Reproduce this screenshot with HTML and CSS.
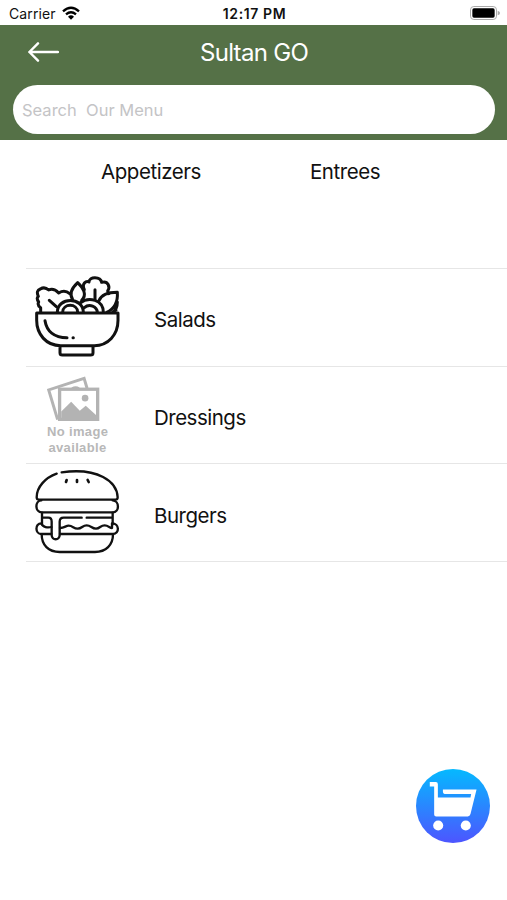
FILE: index.html
```html
<!DOCTYPE html>
<html lang="en">
<head>
<meta charset="utf-8">
<title>Sultan GO</title>
<link rel="stylesheet" href="styles.css">
</head>
<body>
<div class="status">
  <div class="carrier"><span>Carrier</span>
    <svg class="wifi" viewBox="0 0 54 42"><path d="M27 41 18 32Q27 24 36 32Z" fill="#000"/><path d="M12 25Q27 12 42 25M3 16Q27-6 51 16" fill="none" stroke="#000" stroke-width="7"/></svg>
  </div>
  <span class="time">12:17 PM</span>
  <svg class="battery" viewBox="0 0 90 42"><rect x="1.5" y="1.5" width="78" height="39" rx="10" fill="#fff" stroke="#aaa" stroke-width="3"/><rect x="7" y="7" width="67" height="28" rx="5"/><path d="M83 14q7 2 7 7t-7 7z" fill="#aaa"/></svg>
</div>
<header class="header">
  <div class="bar">
    <svg class="back" viewBox="0 0 90 58"><path d="M87 29H4M29 4 4 29 29 54" fill="none" stroke="#fff" stroke-width="7" stroke-linecap="round" stroke-linejoin="round"/></svg>
    <h1 class="title">Sultan GO</h1>
  </div>
  <div class="search"><span>Search&nbsp; Our Menu</span></div>
</header>
<nav class="tabs"><span class="tab appetizers">Appetizers</span><span class="tab entrees">Entrees</span></nav>
<ul class="menu">
  <li class="row">
    <svg class="icon" viewBox="42 39 264 264" fill="none" stroke="#111" stroke-width="9" stroke-linejoin="round" stroke-linecap="round">
      <path d="M50 159H294V181C294 225 264 257 223 257H122C78 257 50 222 50 181ZM120 258V278Q120 285 127 285H212Q219 285 219 278V258"/>
      <path d="M75 182C80 213 102 233 141 233M159 233h1"/>
      <path d="M62 157V143Q51 136 56 126 48 115 55 109 47 92 61 87 74 79 86 90 101 83 116 99 134 88 149 101M88 121 109 140"/>
      <path d="M112 157C112 110 190 110 190 157M128 157C128 129 173 129 173 157"/>
      <path d="M180 129C207 108 250 120 250 157M193 143C208 130 231 139 232 157"/>
      <path d="M158 119C145 99 158 82 173 68 190 84 202 104 185 121"/>
      <path d="M193 89C184 69 199 62 207 66 208 49 241 49 245 67 265 61 271 82 263 93L266 101M225 89V117"/>
      <path d="M237 122C245 103 268 97 292 97 294 124 284 146 260 157M292 126Q292 148 278 157L288 150"/>
    </svg>
    <span class="name salads">Salads</span>
  </li>
  <li class="row">
    <div class="icon missing">
      <svg class="photos" viewBox="82 33 156 136"><path d="M112 165 85 75 192 40 201 70" fill="none" stroke="#b3b3b3" stroke-width="9"/><rect x="118" y="73" width="115" height="91" fill="#fff" stroke="#b3b3b3" stroke-width="10"/><circle cx="195" cy="100" r="10" fill="#b3b3b3"/><path d="M123 140 153 111 179 138 197 123 228 151V160H123Z" fill="#b3b3b3"/><path d="M155 70q12-7 22 0" fill="none" stroke="#b3b3b3" stroke-width="5"/></svg>
      <span class="note">No image<br>available</span>
    </div>
    <span class="name">Dressings</span>
  </li>
  <li class="row">
    <svg class="icon" viewBox="42 27 264 264" fill="none" stroke="#111" stroke-width="7" stroke-linejoin="round" stroke-linecap="round">
      <path d="M110 44C76 56 50 84 50 115Q50 122 57 122H286Q293 122 293 115C291 67 234 25 125 40"/>
      <path d="M140 63l-2 6M171 63v6M203 63l3 6" stroke-width="8"/>
      <path d="M64 124C44 125 44 160 66 160H278C299 160 299 125 278 124"/>
      <path d="M66 161V196M278 161V196M68 176H85Q95 176 95 188V228C95 245 119 245 119 228V188Q119 176 131 176H185M200 176H277"/>
      <path d="M94 225H64C45 225 44 193 64 193 68 205 84 207 94 204M120 207C134 207 137 200 146 200 159 200 160 209 173 209 186 209 187 199 200 199 213 199 215 209 228 209 240 209 241 199 254 199 265 199 269 207 276 207V193C299 193 299 225 279 225H120"/>
      <path d="M65 226C65 258 85 279 119 279H225C258 279 279 258 279 226"/>
    </svg>
    <span class="name">Burgers</span>
  </li>
</ul>
<button class="cart" aria-label="Cart">
  <svg viewBox="35 27 220 220" fill="#fff"><path d="M76 66H94Q100 66 100 72V112H197L199 101H120Q115 101 115 95V88H215L197 161Q195 168 189 168H95Q89 168 89 162V79H76Z"/><circle cx="101" cy="195" r="15"/><circle cx="183" cy="195" r="15"/></svg>
</button>
</body>
</html>
```
FILE: styles.css
```css
* { box-sizing: border-box; }
body { margin: 0; height: 900px; overflow: hidden; background: #fff; color: #111; font-family: Inter, "Liberation Sans", sans-serif; }
.status { display: grid; grid-template-columns: 1fr auto 1fr; align-items: center; height: 25px; padding: 2px 7px 0 9px; }
.carrier { display: flex; align-items: center; gap: 6px; font-size: 14px; letter-spacing: 0.1px; }
.wifi { width: 18px; height: 14px; margin-top: -2px; }
.time { font-size: 14px; font-weight: 600; letter-spacing: 0.6px; white-space: nowrap; }
.battery { justify-self: end; width: 30px; height: 14px; margin-top: -1px; }
.header { height: 115px; background: #557147; padding: 0 12px 0 13px; }
.bar { display: grid; grid-template-columns: 60px 1fr 60px; align-items: center; height: 60px; padding-bottom: 6px; }
.back { width: 31px; height: 20px; margin-left: 15px; }
.title { margin: 0; font-size: 24px; font-weight: 400; letter-spacing: -0.7px; color: #fff; text-align: center; }
.search { display: flex; align-items: center; height: 49px; padding-left: 9px; border-radius: 25px; background: #fff; color: #c4c4c6; font-size: 16.5px; }
.tabs { display: flex; height: 128px; padding: 19px 0 0 101px; font-size: 20.5px; line-height: 26px; letter-spacing: -0.45px; }
.appetizers { width: 209px; }
.menu { margin: 0 0 0 26px; padding: 0; list-style: none; border-top: 1px solid #e6e6e6; }
.row { display: flex; align-items: center; gap: 32px; height: 97.6px; padding-left: 8px; border-bottom: 1px solid #e6e6e6; }
.icon { flex: none; width: 88px; height: 88px; }
.name { font-size: 20.5px; letter-spacing: -0.5px; padding-top: 6px; }
.salads { padding-top: 4px; }
.missing { display: flex; flex-direction: column; align-items: flex-start; padding: 5px 0 0 13px; }
.photos { width: 53px; height: 45px; }
.note { width: 61px; margin-top: 3px; color: #b8b8b8; font: bold 13px/16px "Liberation Sans", sans-serif; letter-spacing: 0.35px; text-align: center; white-space: nowrap; }
.cart { position: fixed; left: 416px; top: 769px; width: 74px; height: 74px; padding: 0; border: 0; border-radius: 50%; background: linear-gradient(#05b9ff, #4d55ff); }
.cart svg { display: block; width: 74px; height: 74px; }
```
